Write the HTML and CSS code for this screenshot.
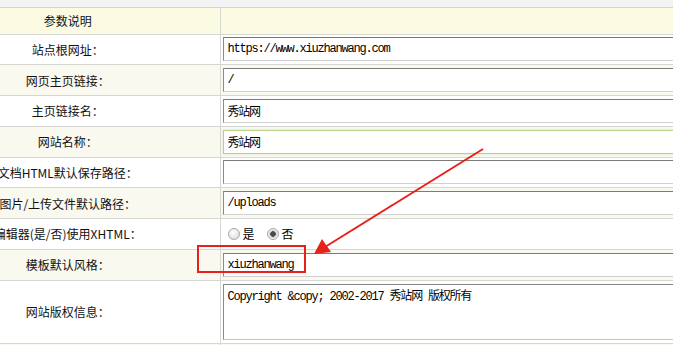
FILE: index.html
```html
<!DOCTYPE html>
<html lang="zh-CN">
<head>
    <meta charset="UTF-8">
    <title>系统基本参数</title>
    <link rel="stylesheet" href="styles.css">
</head>
<body>
    <div class="page">
        <div class="top-strip"></div>

        <div class="sheet">
            <table class="config-table">
                <tr class="head">
                    <td class="label">参数说明</td>
                    <td class="value"></td>
                </tr>
                <tr>
                    <td class="label">站点根网址：</td>
                    <td class="value"><input class="field" type="text" value="https://www.xiuzhanwang.com"></td>
                </tr>
                <tr class="alt">
                    <td class="label">网页主页链接：</td>
                    <td class="value"><input class="field" type="text" value="/"></td>
                </tr>
                <tr>
                    <td class="label">主页链接名：</td>
                    <td class="value"><input class="field" type="text" value="秀站网"></td>
                </tr>
                <tr class="alt">
                    <td class="label">网站名称：</td>
                    <td class="value"><input class="field is-focused" type="text" value="秀站网"></td>
                </tr>
                <tr>
                    <td class="label">文档HTML默认保存路径：</td>
                    <td class="value"><input class="field" type="text" value=""></td>
                </tr>
                <tr class="alt">
                    <td class="label">图片/上传文件默认路径：</td>
                    <td class="value"><input class="field" type="text" value="/uploads"></td>
                </tr>
                <tr>
                    <td class="label">编辑器(是/否)使用XHTML：</td>
                    <td class="value">
                        <div class="choice">
                            <label class="choice-item"><input class="radio" type="radio" name="xhtml"> 是</label>
                            <label class="choice-item"><input class="radio" type="radio" name="xhtml" checked> 否</label>
                        </div>
                    </td>
                </tr>
                <tr class="alt">
                    <td class="label">模板默认风格：</td>
                    <td class="value"><input class="field" type="text" value="xiuzhanwang"></td>
                </tr>
                <tr class="tall">
                    <td class="label">网站版权信息：</td>
                    <td class="value"><textarea class="field area">Copyright &amp;copy; 2002-2017 秀站网 版权所有</textarea></td>
                </tr>
                <tr class="alt">
                    <td class="label"></td>
                    <td class="value"></td>
                </tr>
            </table>
        </div>

        <!-- annotation drawn over the form -->
        <svg class="annotation" width="673" height="345" viewBox="0 0 673 345">
            <rect x="198" y="246" width="107" height="26" fill="none" stroke="#e8201c" stroke-width="2"/>
            <line x1="483" y1="149" x2="325" y2="247" stroke="#e8201c" stroke-width="2"/>
            <polygon points="314,254 322,239 331,252" fill="#e8201c"/>
        </svg>
    </div>
</body>
</html>
```

FILE: styles.css
```css
* {
    margin: 0;
    padding: 0;
    box-sizing: border-box;
}

html,
body {
    overflow: hidden;
}

body {
    width: 673px;
    height: 345px;
    background: #fff;
    font-family: "Noto Sans CJK SC", sans-serif;
    font-size: 12px;
    color: #111;
}

.page {
    position: relative;
    height: 345px;
}

.top-strip {
    height: 8px;
    background: #f3f3f3;
    border-bottom: 1px solid #d3d3d3;
}

.sheet {
    overflow: hidden;
}

.config-table {
    border-collapse: collapse;
    table-layout: fixed;
    width: 1000px;
    margin-left: -84px;
}

.config-table td {
    height: 30.75px;
    padding: 0;
    border-bottom: 1px solid #d6d6d2;
    vertical-align: middle;
}

.config-table .label {
    width: 304px;
    text-align: center;
    white-space: nowrap;
    border-right: 1px solid #d6d6d2;
}

.config-table .value {
    padding-left: 2px;
}

.head td {
    height: 26px;
    background: #fbfae3;
}

.alt td {
    background: #f9f9f0;
}

.tall td {
    height: 63px;
}

.field {
    display: block;
    width: 520px;
    height: 24px;
    padding: 0 4px;
    border: 1px solid;
    border-color: #7b7b7b #c6c6c6 #d0d0d0 #8a8a8a;
    background: #fff;
    font-family: "Liberation Mono", "Noto Sans CJK SC", monospace;
    font-size: 12px;
    letter-spacing: -1.2px;
    color: #000;
    outline: none;
}

.field.is-focused {
    border-color: #b7cf8b;
    box-shadow: 0 0 2px #d4e4b4;
}

.area {
    height: 56px;
    padding: 5px 4px;
    border-color: #858585 #b8b8b8 #c4c4c4 #8a8a8a;
    resize: none;
    line-height: 14px;
}

.choice {
    display: flex;
    align-items: center;
    gap: 12px;
    padding-left: 5px;
}

.choice-item {
    display: flex;
    align-items: center;
    gap: 3px;
    color: #000;
}

.radio {
    appearance: none;
    width: 12px;
    height: 12px;
    border: 1px solid #a8a8a8;
    border-radius: 50%;
    background: radial-gradient(circle at 40% 35%, #ffffff, #d6d6d6);
}

.radio:checked {
    background: radial-gradient(circle, #4a4a4a 0 2.5px, #cfcfcf 3px, #f2f2f2 5px);
}

.annotation {
    position: absolute;
    top: 0;
    left: 0;
    pointer-events: none;
}
```
